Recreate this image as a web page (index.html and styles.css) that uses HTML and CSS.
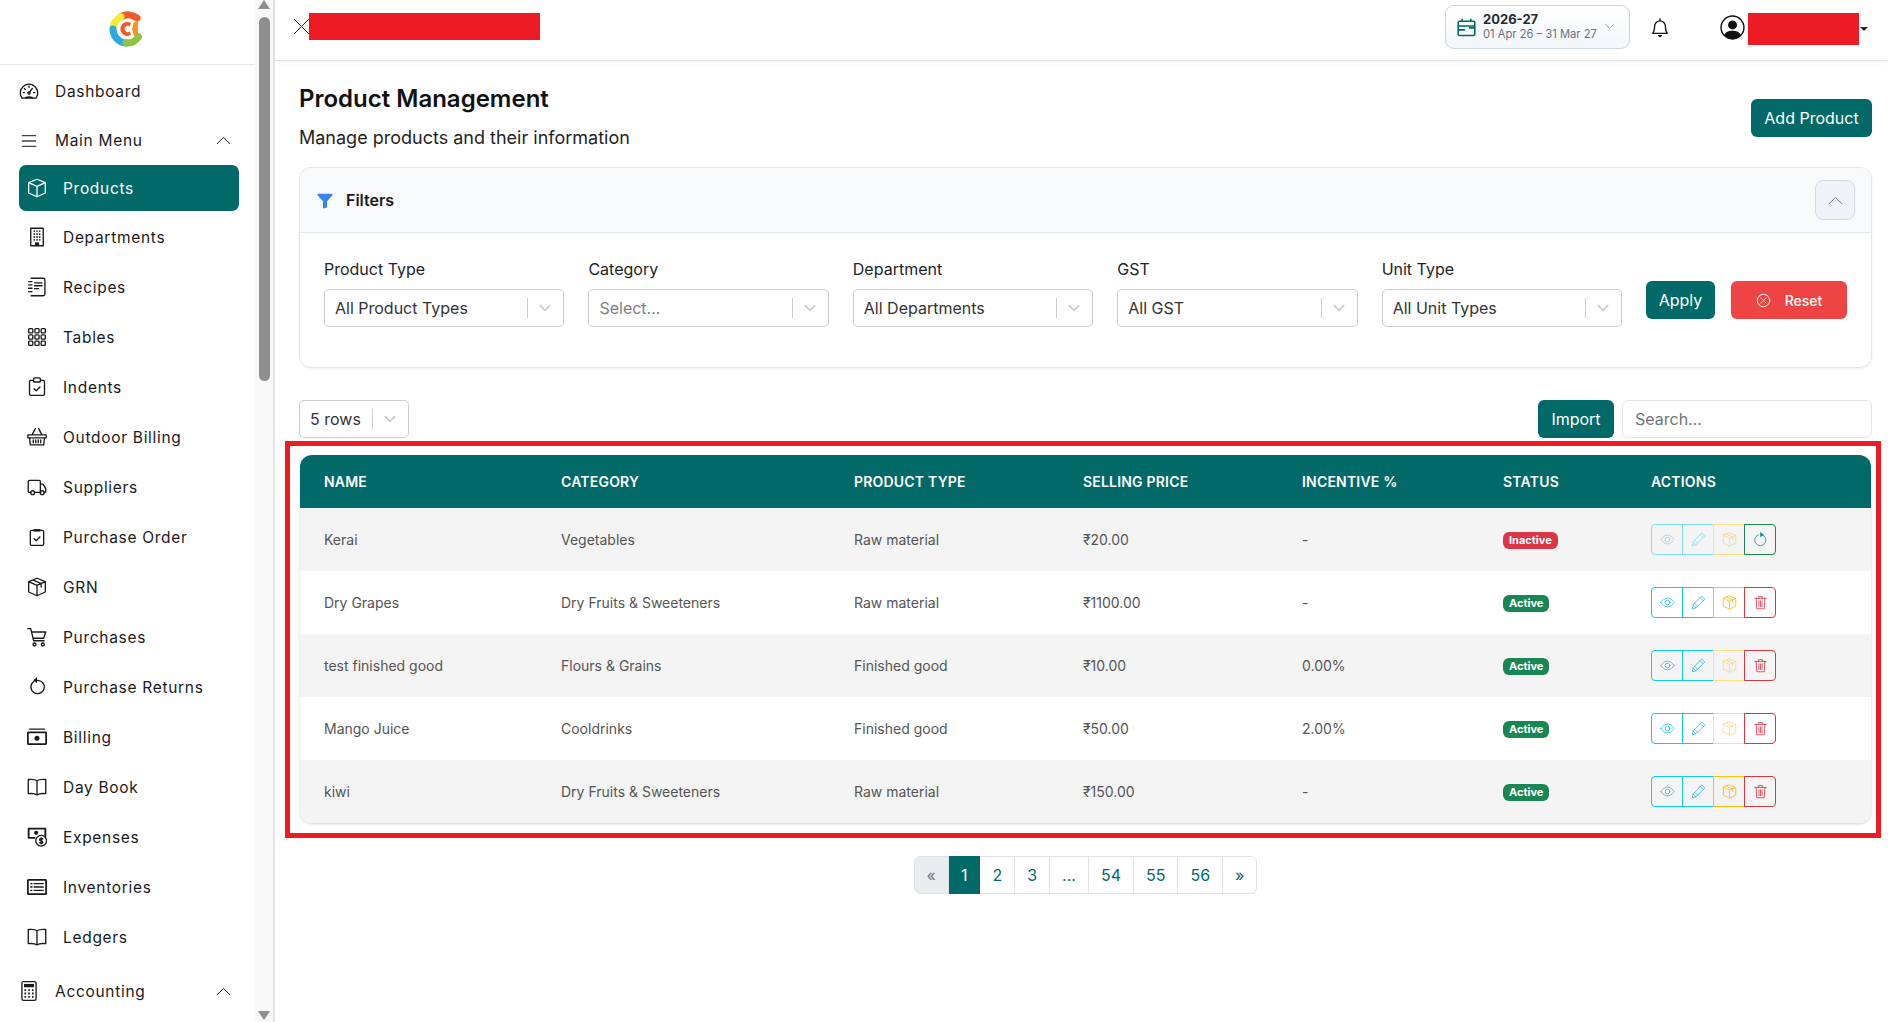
FILE: index.html
```html
<!DOCTYPE html>
<html lang="en">
<head>
<meta charset="utf-8">
<title>Product Management</title>
<link rel="stylesheet" href="styles.css">
</head>
<body>
<svg class="defs" width="0" height="0">
  <symbol id="i-dash" viewBox="0 0 24 24"><path d="M3.500 20.500A10.500 10.500 0 1 1 20.500 20.500zM7 20.500c1-2 9-2 10 0M12 14l4-5"/><circle cx="12" cy="14.500" r="1.400"/><path d="M12 6v1.500M6.500 9l1 1M5 14h1.500M17.500 14H19"/></symbol>
  <symbol id="i-menu" viewBox="0 0 24 24"><path d="M4 5.500h16M4 12h16M4 18.500h16"/></symbol>
  <symbol id="i-box" viewBox="0 0 24 24"><path d="M12 1.500l10 4v12.500l-10 4.500-10-4.500V5.500zM2 5.500l10 4.500 10-4.500M12 10v12.500"/></symbol>
  <symbol id="i-box2" viewBox="0 0 24 24"><path d="M12 1.500l10 4v12.500l-10 4.500-10-4.500V5.500zM2 5.500l10 4.500 10-4.500M12 10v12.500M7 3.500l10 4.500v4"/></symbol>
  <symbol id="i-build" viewBox="0 0 24 24"><path d="M4.500 1.500h15v21h-15z"/><path class="heavy" d="M8 5h1.500M11.300 5h1.500M14.600 5H16M8 8.500h1.500M11.300 8.500h1.500M14.600 8.500H16M8 12h1.500M11.300 12h1.500M14.600 12H16M8 15.500h1.500M11.300 15.500h1.500M14.600 15.500H16"/><path class="solid" d="M9.500 18.500h5v4h-5z"/></symbol>
  <symbol id="i-journal" viewBox="0 0 24 24"><path d="M5 1.500h14.500a2 2 0 0 1 2 2v17a2 2 0 0 1-2 2H5M9 7h9M9 10.500h9M9 14h5M2 5.500h4M2 9.500h4M2 13.500h4M2 17.500h4"/></symbol>
  <symbol id="i-grid" viewBox="0 0 24 24"><rect x="2" y="2" width="5" height="5" rx="1"/><rect x="9.500" y="2" width="5" height="5" rx="1"/><rect x="17" y="2" width="5" height="5" rx="1"/><rect x="2" y="9.500" width="5" height="5" rx="1"/><rect x="9.500" y="9.500" width="5" height="5" rx="1"/><rect x="17" y="9.500" width="5" height="5" rx="1"/><rect x="2" y="17" width="5" height="5" rx="1"/><rect x="9.500" y="17" width="5" height="5" rx="1"/><rect x="17" y="17" width="5" height="5" rx="1"/></symbol>
  <symbol id="i-clip" viewBox="0 0 24 24"><path d="M7.500 4H4.500a1.500 1.500 0 0 0-1.500 1.500v15A1.500 1.500 0 0 0 4.500 22h15a1.500 1.500 0 0 0 1.500-1.500v-15A1.500 1.500 0 0 0 19.500 4h-3M9 1h6a1 1 0 0 1 1 1v3a1 1 0 0 1-1 1H9a1 1 0 0 1-1-1V2a1 1 0 0 1 1-1zM8.500 14l2.500 2.500 4.500-4.500"/></symbol>
  <symbol id="i-clip2" viewBox="0 0 24 24"><path d="M8 4H5.500A1.500 1.500 0 0 0 4 5.500v15A1.500 1.500 0 0 0 5.500 22h13a1.500 1.500 0 0 0 1.500-1.500v-15A1.500 1.500 0 0 0 18.500 4H16M8.500 14l2.500 2.500 4.500-4.500"/><path class="solid" d="M8 2.500h8v3H8z"/></symbol>
  <symbol id="i-basket" viewBox="0 0 24 24"><path d="M6 9.500L10 2M18 9.500L14 2M1 9.500h22v3.500H1zM3 13l1 8.500h16l1-8.500M7.500 15.500v3.500M10.500 15.500v3.500M13.500 15.500v3.500M16.500 15.500v3.500"/></symbol>
  <symbol id="i-truck" viewBox="0 0 24 24"><path d="M4.500 18.500H2.500a1 1 0 0 1-1-1V5.500a1.500 1.500 0 0 1 1.500-1.500h11.500a1.500 1.500 0 0 1 1.500 1.500v13H9M16 8.500h3l3.500 5v4a1 1 0 0 1-1 1h-1M16 18.500h.5"/><circle cx="6.800" cy="18.800" r="2.300"/><circle cx="18.200" cy="18.800" r="2.300"/></symbol>
  <symbol id="i-cart" viewBox="0 0 24 24"><path d="M1 2h3.500L8 16.500h12.500M5.500 6h17l-2.500 7.500H7.500"/><circle cx="9" cy="21" r="1.800"/><circle cx="19" cy="21" r="1.800"/></symbol>
  <symbol id="i-undo" viewBox="0 0 24 24"><path d="M8 5.500a8 8 0 1 0 4-1.500"/><path class="solid" d="M12 0v7.500L7.500 4z"/></symbol>
  <symbol id="i-cash" viewBox="0 0 24 24"><path d="M3 2.500h18"/><path d="M2 6.500h20a1 1 0 0 1 1 1v12a1 1 0 0 1-1 1H2a1 1 0 0 1-1-1v-12a1 1 0 0 1 1-1z" class="thick"/><circle class="solid" cx="12" cy="13.500" r="3"/></symbol>
  <symbol id="i-book" viewBox="0 0 24 24"><path d="M12 4.500C10 3 6 2.500 1.500 3v17c4.500-.5 8.500 0 10.500 1.500 2-1.500 6-2 10.500-1.500V3C18 2.500 14 3 12 4.500zM12 4.500v17"/></symbol>
  <symbol id="i-exp" viewBox="0 0 24 24"><path class="thick" d="M2 2h20v9M2 2v11h7"/><circle class="solid" cx="11" cy="7" r="2.500"/><circle cx="17" cy="16.500" r="6.500"/><path d="M19 14.500c-1-1-4-1-4 .8s4 1 4 3c0 1.600-3 1.600-4 .5M17 12.800v7.500"/></symbol>
  <symbol id="i-list" viewBox="0 0 24 24"><path class="thick" d="M2 3.500h20a1 1 0 0 1 1 1v15a1 1 0 0 1-1 1H2a1 1 0 0 1-1-1v-15a1 1 0 0 1 1-1z"/><path d="M8.500 8h11M8.500 12h11M8.500 16h11M4.500 8h1.500M4.500 12h1.500M4.500 16h1.500"/></symbol>
  <symbol id="i-calc" viewBox="0 0 24 24"><path d="M5.500.8h13a2 2 0 0 1 2 2v18.400a2 2 0 0 1-2 2h-13a2 2 0 0 1-2-2V2.800a2 2 0 0 1 2-2z"/><path class="solid" d="M6 3.500h12v4H6z"/><path class="heavy" d="M6.500 11h2M11 11h2M15.500 11h2M6.500 15h2M11 15h2M15.500 15h2M6.500 19h2M11 19h2M15.500 19h2"/></symbol>
  <symbol id="i-chev" viewBox="0 0 24 24"><path d="M2 17L12 7l10 10"/></symbol>
  <symbol id="i-down" viewBox="0 0 24 24"><path d="M5 8.500l7 7 7-7"/></symbol>
  <symbol id="i-x" viewBox="0 0 24 24"><path d="M2 2l20 20M22 2L2 22"/></symbol>
  <symbol id="i-cal" viewBox="0 0 24 24"><path d="M3 4h18a2 2 0 0 1 1.500 2v14.500a1.500 1.500 0 0 1-1.500 1.500H3a1.500 1.500 0 0 1-1.500-1.500V6A2 2 0 0 1 3 4zM1.500 10h21M6.500 1.500v3M17.500 1.500v3"/><path class="heavy" d="M2 15h8M15 12.500h7.500"/></symbol>
  <symbol id="i-bell" viewBox="0 0 24 24"><path d="M3 18.500c2-2 2.500-3 2.500-8.500a6.500 6.500 0 0 1 13 0c0 5.500.5 6.500 2.500 8.500zM12 1v2.500"/><path class="solid" d="M9.500 20.500h5a2.500 2.500 0 0 1-5 0z"/></symbol>
  <symbol id="i-user" viewBox="0 0 24 24"><circle cx="12" cy="12" r="11"/><circle class="solid" cx="12" cy="9.500" r="4.300"/><path class="solid" d="M4 19.500c1-3.500 4.500-4.500 8-4.500s7 1 8 4.500c-2 2-5 3.500-8 3.500s-6-1.500-8-3.500z"/></symbol>
  <symbol id="i-eye" viewBox="0 0 24 24"><path d="M1.500 12S5.500 5 12 5s10.500 7 10.500 7-4 7-10.500 7S1.500 12 1.500 12z"/><circle cx="12" cy="12" r="3.800"/></symbol>
  <symbol id="i-pen" viewBox="0 0 24 24"><path d="M17.500 2l4.500 4.500L8 20.500 2 22l1.500-6zM15 4.500L19.500 9M3.500 16L8 20.500M6 13.500l4.500 4.500"/></symbol>
  <symbol id="i-trash" viewBox="0 0 24 24"><path d="M3 5.500h18M9 5.500V2.500h6v3M5 5.500l1 16.500h12l1-16.500M9.500 9.500v9M12 9.500v9M14.500 9.500v9"/></symbol>
  <symbol id="i-restore" viewBox="0 0 24 24"><path d="M8.500 4.500a9 9 0 1 0 6.500 0"/><path class="solid" d="M11.500 0l6 4.500-6 4z"/></symbol>
  <symbol id="i-circlex" viewBox="0 0 24 24"><circle cx="12" cy="12" r="10"/><path d="M8 8l8 8M16 8l-8 8"/></symbol>
  <symbol id="i-funnel" viewBox="0 0 24 24"><path class="solid" d="M1 2h22v2.500L15 13v9.500l-6 1.500V13L1 4.500z"/></symbol>
</svg>

<div class="app">
  <aside class="sidebar">
    <div class="side-inner">
      <div class="logo-row">
        <svg class="logo" viewBox="0 0 36 36" aria-hidden="true">
          <g fill="none" stroke-width="7">
            <path stroke="#f15a29" d="M12 5.800A14 14 0 0 1 28 7"/>
            <path stroke="#f7ec2e" d="M12 5.800A14 14 0 0 0 4 18"/>
            <path stroke="#29abe2" d="M4 18A14 14 0 0 0 17 32"/>
            <path stroke="#8cc63f" d="M17 32A14 14 0 0 0 29.500 26"/>
          </g>
          <path fill="#f15a29" d="M22 12a7 7 0 1 0 0 12l-2-6z"/>
          <path fill="#fff" d="M21 16a3 3 0 1 0 0 4z"/>
          <path fill="#f7931e" d="M25 11h4v14h-4l-2-7z"/>
        </svg>
      </div>
      <nav class="nav">
        <a class="nav-head nav-first"><svg class="ic"><use href="#i-dash"/></svg><span>Dashboard</span></a>
        <a class="nav-head nav-group"><svg class="ic ic-gray"><use href="#i-menu"/></svg><span>Main Menu</span><svg class="chev"><use href="#i-chev"/></svg></a>
        <a class="nav-item active"><svg class="ic"><use href="#i-box"/></svg><span>Products</span></a>
        <a class="nav-item"><svg class="ic"><use href="#i-build"/></svg><span>Departments</span></a>
        <a class="nav-item"><svg class="ic"><use href="#i-journal"/></svg><span>Recipes</span></a>
        <a class="nav-item"><svg class="ic"><use href="#i-grid"/></svg><span>Tables</span></a>
        <a class="nav-item"><svg class="ic"><use href="#i-clip"/></svg><span>Indents</span></a>
        <a class="nav-item"><svg class="ic"><use href="#i-basket"/></svg><span>Outdoor Billing</span></a>
        <a class="nav-item"><svg class="ic"><use href="#i-truck"/></svg><span>Suppliers</span></a>
        <a class="nav-item"><svg class="ic"><use href="#i-clip2"/></svg><span>Purchase Order</span></a>
        <a class="nav-item"><svg class="ic"><use href="#i-box2"/></svg><span>GRN</span></a>
        <a class="nav-item"><svg class="ic"><use href="#i-cart"/></svg><span>Purchases</span></a>
        <a class="nav-item"><svg class="ic"><use href="#i-undo"/></svg><span>Purchase Returns</span></a>
        <a class="nav-item"><svg class="ic"><use href="#i-cash"/></svg><span>Billing</span></a>
        <a class="nav-item"><svg class="ic"><use href="#i-book"/></svg><span>Day Book</span></a>
        <a class="nav-item"><svg class="ic"><use href="#i-exp"/></svg><span>Expenses</span></a>
        <a class="nav-item"><svg class="ic"><use href="#i-list"/></svg><span>Inventories</span></a>
        <a class="nav-item"><svg class="ic"><use href="#i-book"/></svg><span>Ledgers</span></a>
        <a class="nav-head nav-acc"><svg class="ic"><use href="#i-calc"/></svg><span>Accounting</span><svg class="chev"><use href="#i-chev"/></svg></a>
      </nav>
    </div>
    <div class="scrollbar">
      <div class="arrow-up"></div>
      <div class="thumb"></div>
      <div class="arrow-down"></div>
    </div>
  </aside>

  <div class="main">
    <header class="topbar">
      <div class="top-left">
        <svg class="close"><use href="#i-x"/></svg>
        <div class="redact redact-title"></div>
      </div>
      <div class="top-right">
        <div class="fy">
          <svg class="fy-ic"><use href="#i-cal"/></svg>
          <div class="fy-text">
            <div class="fy-year">2026-27</div>
            <div class="fy-range">01 Apr 26 – 31 Mar 27</div>
          </div>
          <svg class="fy-down"><use href="#i-down"/></svg>
        </div>
        <svg class="bell"><use href="#i-bell"/></svg>
        <div class="user">
          <svg class="user-ic"><use href="#i-user"/></svg>
          <div class="redact redact-user"></div>
          <div class="caret"></div>
        </div>
      </div>
    </header>

    <main class="content">
      <div class="page-head">
        <div>
          <h1>Product Management</h1>
          <p>Manage products and their information</p>
        </div>
        <button class="btn btn-add">Add Product</button>
      </div>

      <section class="filters">
        <div class="filters-head">
          <div class="filters-title"><svg class="funnel"><use href="#i-funnel"/></svg><span>Filters</span></div>
          <button class="collapse"><svg><use href="#i-chev"/></svg></button>
        </div>
        <div class="filters-body">
          <label class="field"><span class="field-label">Product Type</span>
            <div class="select"><span class="sel-val">All Product Types</span><i class="sel-sep"></i><svg class="sel-arrow"><use href="#i-down"/></svg></div></label>
          <label class="field"><span class="field-label">Category</span>
            <div class="select"><span class="sel-val sel-ph">Select...</span><i class="sel-sep"></i><svg class="sel-arrow"><use href="#i-down"/></svg></div></label>
          <label class="field"><span class="field-label">Department</span>
            <div class="select"><span class="sel-val">All Departments</span><i class="sel-sep"></i><svg class="sel-arrow"><use href="#i-down"/></svg></div></label>
          <label class="field"><span class="field-label">GST</span>
            <div class="select"><span class="sel-val">All GST</span><i class="sel-sep"></i><svg class="sel-arrow"><use href="#i-down"/></svg></div></label>
          <label class="field"><span class="field-label">Unit Type</span>
            <div class="select"><span class="sel-val">All Unit Types</span><i class="sel-sep"></i><svg class="sel-arrow"><use href="#i-down"/></svg></div></label>
          <button class="btn btn-apply">Apply</button>
          <button class="btn btn-reset"><svg><use href="#i-circlex"/></svg><span>Reset</span></button>
        </div>
      </section>

      <div class="toolbar">
        <div class="select select-rows"><span class="sel-val">5 rows</span><i class="sel-sep"></i><svg class="sel-arrow"><use href="#i-down"/></svg></div>
        <div class="toolbar-right">
          <button class="btn btn-import">Import</button>
          <div class="search">Search...</div>
        </div>
      </div>

      <div class="table-card">
        <table>
          <colgroup>
            <col class="c-name"><col class="c-cat"><col class="c-type"><col class="c-price"><col class="c-inc"><col class="c-status"><col class="c-act">
          </colgroup>
          <thead>
            <tr><th>NAME</th><th>CATEGORY</th><th>PRODUCT TYPE</th><th>SELLING PRICE</th><th>INCENTIVE %</th><th>STATUS</th><th>ACTIONS</th></tr>
          </thead>
          <tbody>
            <tr>
              <td>Kerai</td><td>Vegetables</td><td>Raw material</td><td>₹20.00</td><td>-</td>
              <td><span class="badge badge-off">Inactive</span></td>
              <td><div class="acts"><button class="act a-info dim"><svg><use href="#i-eye"/></svg></button><button class="act a-info dim"><svg><use href="#i-pen"/></svg></button><button class="act a-warn dim"><svg><use href="#i-box2"/></svg></button><button class="act a-ok"><svg><use href="#i-restore"/></svg></button></div></td>
            </tr>
            <tr>
              <td>Dry Grapes</td><td>Dry Fruits &amp; Sweeteners</td><td>Raw material</td><td>₹1100.00</td><td>-</td>
              <td><span class="badge badge-on">Active</span></td>
              <td><div class="acts"><button class="act a-info"><svg><use href="#i-eye"/></svg></button><button class="act a-info"><svg><use href="#i-pen"/></svg></button><button class="act a-warn"><svg><use href="#i-box2"/></svg></button><button class="act a-del"><svg><use href="#i-trash"/></svg></button></div></td>
            </tr>
            <tr>
              <td>test finished good</td><td>Flours &amp; Grains</td><td>Finished good</td><td>₹10.00</td><td>0.00%</td>
              <td><span class="badge badge-on">Active</span></td>
              <td><div class="acts"><button class="act a-info"><svg><use href="#i-eye"/></svg></button><button class="act a-info"><svg><use href="#i-pen"/></svg></button><button class="act a-warn dim"><svg><use href="#i-box2"/></svg></button><button class="act a-del"><svg><use href="#i-trash"/></svg></button></div></td>
            </tr>
            <tr>
              <td>Mango Juice</td><td>Cooldrinks</td><td>Finished good</td><td>₹50.00</td><td>2.00%</td>
              <td><span class="badge badge-on">Active</span></td>
              <td><div class="acts"><button class="act a-info"><svg><use href="#i-eye"/></svg></button><button class="act a-info"><svg><use href="#i-pen"/></svg></button><button class="act a-warn dim"><svg><use href="#i-box2"/></svg></button><button class="act a-del"><svg><use href="#i-trash"/></svg></button></div></td>
            </tr>
            <tr>
              <td>kiwi</td><td>Dry Fruits &amp; Sweeteners</td><td>Raw material</td><td>₹150.00</td><td>-</td>
              <td><span class="badge badge-on">Active</span></td>
              <td><div class="acts"><button class="act a-info"><svg><use href="#i-eye"/></svg></button><button class="act a-info"><svg><use href="#i-pen"/></svg></button><button class="act a-warn"><svg><use href="#i-box2"/></svg></button><button class="act a-del"><svg><use href="#i-trash"/></svg></button></div></td>
            </tr>
          </tbody>
        </table>
      </div>

      <nav class="pager">
        <a class="pg pg-off">«</a><a class="pg pg-on">1</a><a class="pg">2</a><a class="pg">3</a><a class="pg">...</a><a class="pg">54</a><a class="pg">55</a><a class="pg">56</a><a class="pg">»</a>
      </nav>
    </main>
  </div>
</div>
<div class="annotation"></div>
</body>
</html>
```
FILE: styles.css
```css
* { box-sizing: border-box; }
html, body { margin: 0; height: 100%; }
body {
  position: relative;
  overflow: hidden;
  background: #fff;
  color: #212529;
  font-family: Inter, "Liberation Sans", sans-serif;
}
.defs { position: absolute; }
svg { fill: none; stroke: currentColor; stroke-width: 1.6; stroke-linecap: round; stroke-linejoin: round; }
.solid { fill: currentColor; stroke: none; }
.heavy { stroke-width: 2.2; stroke-linecap: butt; }
.thick { stroke-width: 2.2; }
button { font-family: inherit; cursor: pointer; }

.app { display: flex; height: 100vh; }

/* Sidebar */
.sidebar {
  display: flex;
  flex: 0 0 275px;
  height: 100%;
  border-right: 2px solid #e3e3ea;
  background: #fff;
  overflow: hidden;
}
.side-inner { flex: 0 0 255px; overflow: hidden; }
.logo-row { display: flex; justify-content: center; align-items: center; height: 65px; padding: 0 2px 7px 0; border-bottom: 1px solid #e6e6ec; }
.logo { width: 36px; height: 36px; stroke: none; }
.nav { display: flex; flex-direction: column; color: #1a1a1a; font-size: 15.5px; letter-spacing: .7px; }
.nav a { display: flex; align-items: center; text-decoration: none; color: inherit; }
.nav-head { height: 50px; padding-left: 19px; }
.nav-first { margin-top: 1px; }
.nav-group { height: 49px; }
.nav-head .ic { margin-right: 16px; }
.nav-head .chev { margin-left: auto; margin-right: 24px; width: 15px; height: 15px; stroke-width: 1.6; }
.nav-item { height: 46px; margin: 0 16px 4px 19px; padding-left: 8px; border-radius: 7px; }
.nav-item .ic { margin-right: 16px; }
.nav-item.active { background: #016a68; color: #fff; margin-bottom: 3px; }
.nav-acc { margin-top: 2px; }
.ic { flex: 0 0 20px; width: 20px; height: 20px; }
.ic-gray { color: #444; }

.scrollbar { flex: 0 0 18px; display: flex; flex-direction: column; align-items: center; background: #f8f8f8; }
.arrow-up { width: 0; height: 0; border: 6px solid transparent; border-top: 0; border-bottom: 9px solid #8e8e8e; }
.thumb { width: 11px; height: 364px; margin-top: 8px; border-radius: 6px; background: #8e8e8e; }
.arrow-down { margin-top: auto; margin-bottom: 2px; width: 0; height: 0; border: 6px solid transparent; border-bottom: 0; border-top: 9px solid #8e8e8e; }

/* Main column */
.main { flex: 1; min-width: 0; display: flex; flex-direction: column; }
.topbar {
  display: flex;
  flex: 0 0 61px;
  justify-content: space-between;
  align-items: center;
  border-bottom: 1px solid #e2e2e6;
  box-shadow: 0 2px 4px rgba(0,0,0,.05);
  padding: 0 20px 0 18px;
}
.top-left { display: flex; align-items: center; margin-top: -7px; }
.close { width: 17px; height: 17px; color: #222; stroke-width: 1.4; }
.redact { background: #ed1c24; }
.redact-title { width: 231px; height: 27px; margin-left: -1px; }
.top-right { display: flex; align-items: center; }
.fy {
  display: flex; align-items: center;
  width: 185px; height: 44px;
  margin-top: -6px;
  padding: 0 10px 0 11px;
  border: 1px solid #cbd5e1; border-radius: 9px;
  background: linear-gradient(#fff, #f3f6fa);
}
.fy-ic { width: 19px; height: 19px; color: #016a68; margin-right: 7px; stroke-width: 2; flex: none; }
.fy-text { flex: 1; }
.fy-year { font-size: 13px; font-weight: 700; line-height: 15px; color: #1f2937; }
.fy-range { font-size: 11.2px; line-height: 15px; color: #6b7280; white-space: nowrap; }
.fy-down { width: 13px; height: 13px; color: #8b95a3; margin: -2px 3px 0 0; flex: none; }
.bell { width: 20px; height: 22px; margin: -5px 0 0 20px; color: #111; stroke-width: 1.6; }
.user { display: flex; align-items: center; margin-left: 50px; }
.user-ic { width: 25px; height: 25px; color: #111; margin-top: -5px; stroke-width: 1.4; }
.redact-user { width: 111px; height: 32px; margin-left: 3px; margin-top: -2px; }
.caret { width: 0; height: 0; margin-left: 1px; margin-top: -3px; border: 4px solid transparent; border-bottom: 0; border-top: 4px solid #222; }

.content { flex: 1; padding: 23px 16px 0 24px; }
.page-head { display: flex; justify-content: space-between; align-items: flex-start; }
h1 { margin: 0; font-size: 24px; font-weight: 600; line-height: 30px; color: #111; }
.page-head p { margin: 13px 0 0; font-size: 18px; line-height: 22px; color: #1f1f1f; }
.btn { border: 0; border-radius: 6px; color: #fff; font-size: 16px; background: #016a68; }
.btn-add { width: 121px; height: 38px; margin-top: 15px; }

/* Filters */
.filters { margin-top: 18px; border: 1px solid #e4e7ec; border-radius: 12px; box-shadow: 0 1px 3px rgba(0,0,0,.06); overflow: hidden; background: #fff; }
.filters-head { display: flex; justify-content: space-between; align-items: center; height: 65px; padding: 0 16px 0 17px; background: #f8f9fb; border-bottom: 1px solid #e4e7ec; }
.filters-title { display: flex; align-items: center; font-size: 16px; font-weight: 600; color: #1a1a1a; }
.funnel { width: 16px; height: 17px; margin-right: 13px; color: #3b82f6; }
.collapse { width: 40px; height: 40px; padding: 0; border: 1px solid #d5dae2; border-radius: 8px; background: #eff2f7; display: flex; align-items: center; justify-content: center; color: #6b7280; }
.collapse svg { width: 15px; height: 15px; stroke-width: 1.5; }
.filters-body { display: flex; align-items: flex-start; gap: 24px; height: 134px; padding: 26px 24px 0; }
.field { flex: 1; display: flex; flex-direction: column; min-width: 0; }
.field-label { font-size: 16px; line-height: 20px; margin-bottom: 10px; color: #212529; }
.select { display: flex; align-items: center; height: 38px; padding: 0 10px; border: 1px solid #ccc; border-radius: 5px; background: #fff; font-size: 16px; color: #333; }
.sel-val { flex: 1; white-space: nowrap; }
.sel-ph { color: #808080; }
.sel-sep { width: 1px; height: 20px; background: #ccc; margin: 0 9px 0 0; }
.sel-arrow { width: 16px; height: 16px; color: #ccc; stroke-width: 2.6; }
.btn-apply { flex: none; width: 69px; height: 38px; margin-top: 22px; }
.btn-reset { flex: none; display: flex; align-items: center; justify-content: center; gap: 14px; width: 116px; height: 38px; margin: 22px 0 0 -8px; background: #ef4444; font-size: 14px; font-weight: 500; }
.btn-reset svg { width: 15px; height: 15px; stroke-width: 1.6; }

/* Toolbar */
.toolbar { display: flex; justify-content: space-between; margin-top: 32px; }
.select-rows { width: 110px; }
.toolbar-right { display: flex; gap: 8px; }
.btn-import { width: 76px; height: 38px; }
.search { width: 250px; height: 38px; line-height: 36px; padding: 0 12px; border: 1px solid #e2e5ea; border-radius: 6px; font-size: 16px; color: #6c757d; }

/* Table */
.table-card { margin: 17px 1px 0; height: 368px; border-radius: 12px; box-shadow: 0 1px 3px rgba(0,0,0,.18); overflow: hidden; }
table { width: 100%; border-collapse: collapse; table-layout: fixed; }
.c-name { width: 237px; } .c-cat { width: 293px; } .c-type { width: 229px; } .c-price { width: 219px; }
.c-inc { width: 201px; } .c-status { width: 148px; } .c-act { width: auto; }
th { height: 53px; padding: 0 0 0 24px; background: #016a68; color: #fff; font-size: 14px; font-weight: 600; letter-spacing: .2px; text-align: left; }
td { height: 63px; padding: 0 0 0 24px; font-size: 14px; color: #555; }
tbody tr:nth-child(odd) td { background: #f4f4f4; }
.badge { display: inline-block; padding: 0 6px; border-radius: 6px; font-size: 11px; line-height: 17px; height: 17px; font-weight: 700; color: #fff; vertical-align: middle; }
.badge-off { background: #dc3545; }
.badge-on { background: #198754; }
.acts { display: flex; }
.act { width: 32px; height: 31px; margin-left: -1px; padding: 0; background: transparent; border: 1px solid; display: flex; align-items: center; justify-content: center; }
.act:first-child { margin-left: 0; border-radius: 4px 0 0 4px; }
.act:last-child { border-radius: 0 4px 4px 0; }
.act svg { width: 15px; height: 15px; stroke-width: 1.3; }
.a-info { border-color: #0dcaf0; color: #2bb9ee; }
.a-warn { border-color: #ffc107; color: #ffb81c; }
.a-del { border-color: #dc3545; color: #dc3545; }
.a-ok { border-color: #198754; color: #1c8f83; }
.dim { border-color: #7fe0f5; }
.dim svg { opacity: .5; }
.a-warn.dim { border-color: #ffdf7e; }

/* Pager */
.pager { display: flex; justify-content: center; margin-top: 33px; }
.pg { height: 38px; line-height: 36px; padding: 0 12px; border: 1px solid #dfe2e8; border-left: 0; background: #fff; color: #016a68; font-size: 16px; }
.pg:first-child { border-left: 1px solid #dfe2e8; border-radius: 6px 0 0 6px; }
.pg:last-child { border-radius: 0 6px 6px 0; }
.pg-off { background: #e9ecef; color: #6c757d; }
.pg-on { background: #016a68; border-color: #016a68; color: #fff; }

/* Reviewer's mark drawn over the table */
.annotation { position: absolute; left: 285px; top: 441px; width: 1596px; height: 397px; border: 5px solid #ed1c24; pointer-events: none; }
```
